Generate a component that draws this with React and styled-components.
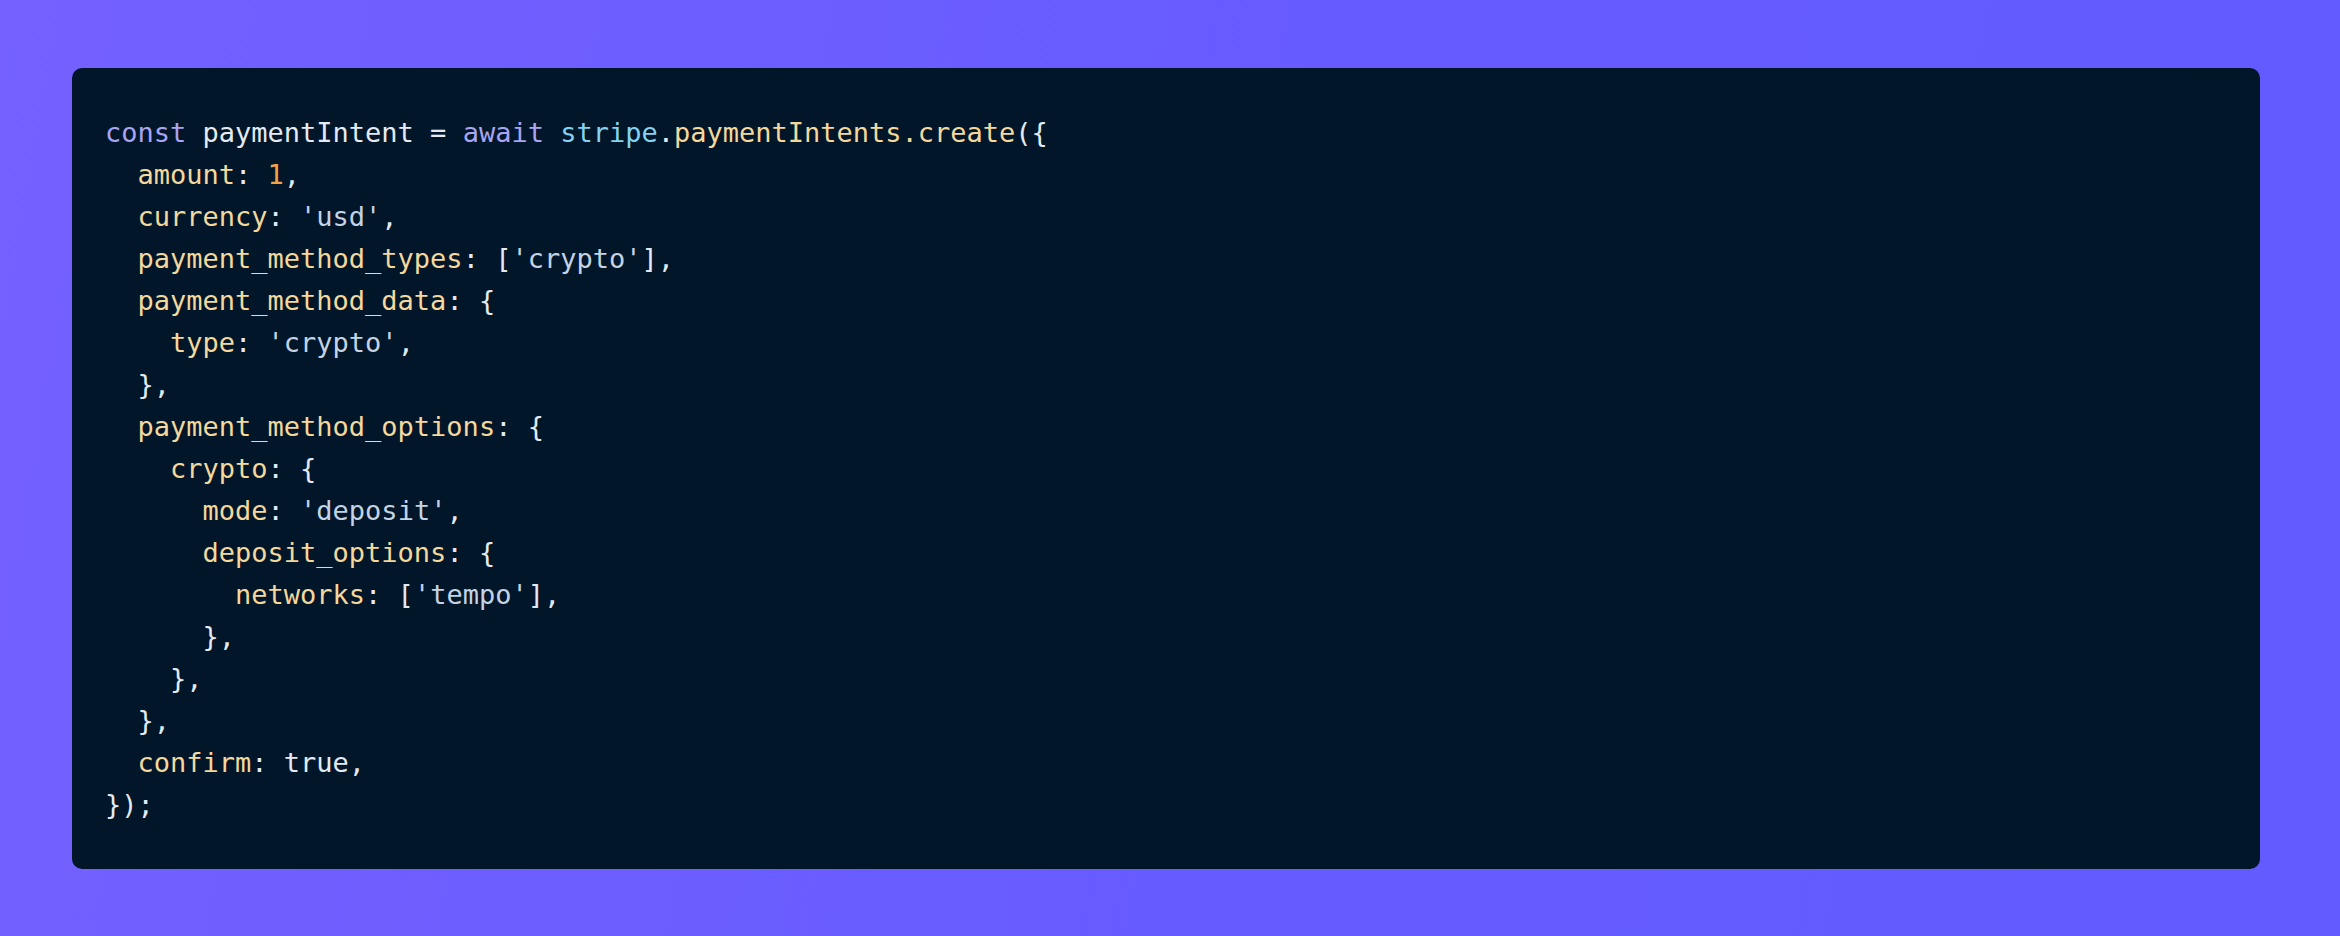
import React from 'react';
import styled, { createGlobalStyle } from 'styled-components';

const GlobalStyle = createGlobalStyle`
  html, body {
    margin: 0;
    padding: 0;
  }
  body {
    background: #635bff;
  }
`;

const Page = styled.div`
  box-sizing: border-box;
  width: 2340px;
  height: 936px;
  padding: 68px 80px 67px 72px;
  background: linear-gradient(100deg, #7461ff 0%, #665bff 55%, #635bff 100%);
  display: flex;
`;

const Card = styled.div`
  flex: 1;
  box-sizing: border-box;
  background-color: #021629;
  border-radius: 10px;
  padding: 44px 33px;
  overflow: hidden;
`;

const Code = styled.pre`
  margin: 0;
  font-family: 'DejaVu Sans Mono', 'Liberation Mono', monospace;
  font-size: 27px;
  line-height: 42px;
  color: #e4eaf3;
`;

const Line = styled.div`
  height: 42px;
  white-space: pre;
`;

const colors = {
  keyword: '#a9a4f3',
  plain: '#e4eaf3',
  object: '#82d3f2',
  prop: '#f4d89c',
  number: '#f5a242',
  string: '#c4d3e6',
};

const Token = styled.span`
  color: ${props => colors[props.$kind] || colors.plain};
`;

const lines = [
  [['keyword', 'const'], ['plain', ' paymentIntent = '], ['keyword', 'await'], ['plain', ' '], ['object', 'stripe'], ['plain', '.'], ['prop', 'paymentIntents.create'], ['plain', '({']],
  [['plain', '  '], ['prop', 'amount'], ['plain', ': '], ['number', '1'], ['plain', ',']],
  [['plain', '  '], ['prop', 'currency'], ['plain', ': '], ['string', "'usd'"], ['plain', ',']],
  [['plain', '  '], ['prop', 'payment_method_types'], ['plain', ': ['], ['string', "'crypto'"], ['plain', '],']],
  [['plain', '  '], ['prop', 'payment_method_data'], ['plain', ': {']],
  [['plain', '    '], ['prop', 'type'], ['plain', ': '], ['string', "'crypto'"], ['plain', ',']],
  [['plain', '  },']],
  [['plain', '  '], ['prop', 'payment_method_options'], ['plain', ': {']],
  [['plain', '    '], ['prop', 'crypto'], ['plain', ': {']],
  [['plain', '      '], ['prop', 'mode'], ['plain', ': '], ['string', "'deposit'"], ['plain', ',']],
  [['plain', '      '], ['prop', 'deposit_options'], ['plain', ': {']],
  [['plain', '        '], ['prop', 'networks'], ['plain', ': ['], ['string', "'tempo'"], ['plain', '],']],
  [['plain', '      },']],
  [['plain', '    },']],
  [['plain', '  },']],
  [['plain', '  '], ['prop', 'confirm'], ['plain', ': true,']],
  [['plain', '});']],
];

const App = () => {
  return (
    <>
      <GlobalStyle />
      <Page>
        <Card>
          <Code>
            {lines.map((tokens, i) => (
              <Line key={i}>
                {tokens.map(([kind, text], j) => (
                  <Token key={j} $kind={kind}>{text}</Token>
                ))}
              </Line>
            ))}
          </Code>
        </Card>
      </Page>
    </>
  );
};

export default App;
